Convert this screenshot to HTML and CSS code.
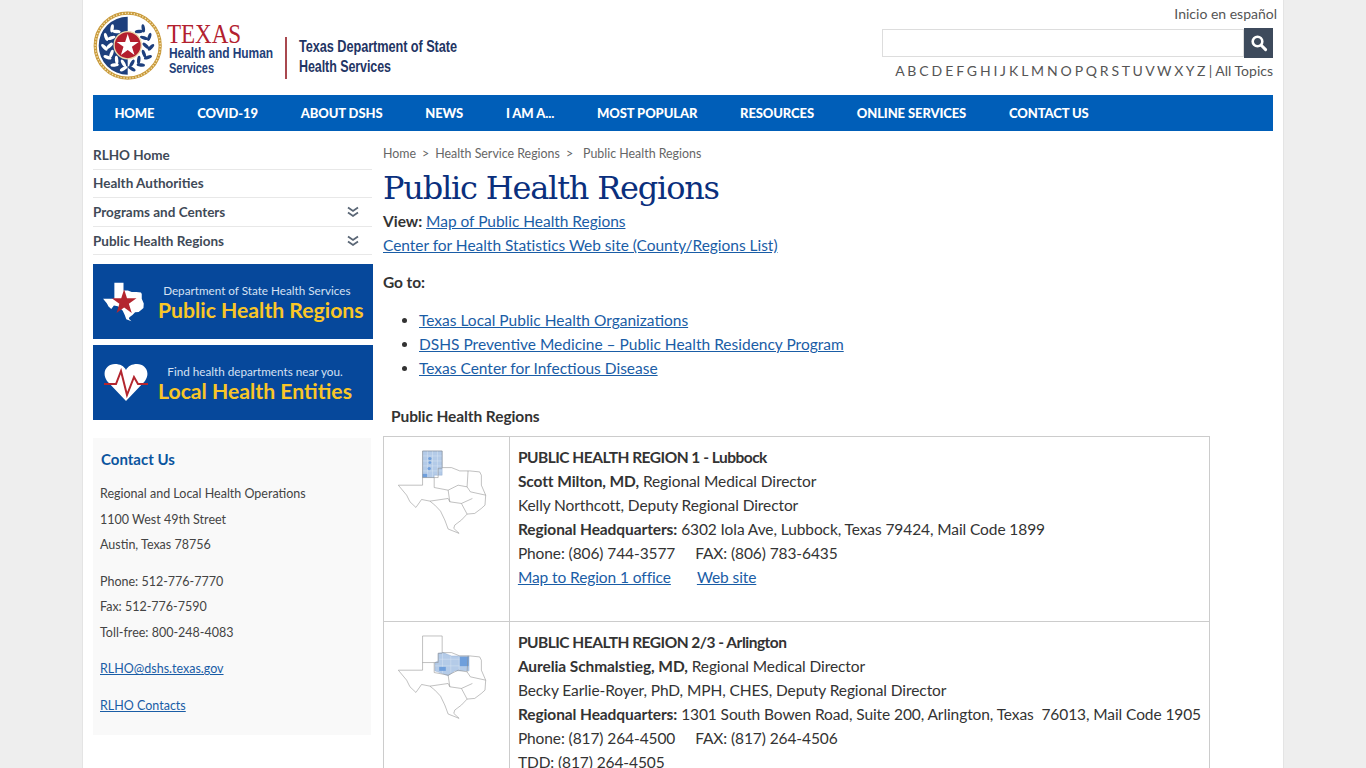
FILE: index.html
```html
<!DOCTYPE html>
<html lang="en">
<head>
<meta charset="utf-8">
<title>Public Health Regions</title>
<link rel="stylesheet" href="styles.css">
</head>
<body>
<svg class="defs" width="0" height="0" aria-hidden="true">
  <symbol id="tx" viewBox="0 0 280 260">
    <path class="tx-line" d="M80 5H139V55H167L192 65H222L252 68L257 78V108L270 138L268 168L257 178L237 193L214 195L197 213L177 228L174 238L190 253L157 240L147 213L134 186L117 168L102 156L77 151L60 175L42 158L32 138L7 108H80Z"/>
    <path class="tx-line" d="M80 85H115V115L157 123L162 158L197 163L214 195M102 156L157 148L162 158M157 123L187 108L214 113L224 128L270 138M214 113L217 65M197 163L230 148M115 85H127V57H139"/>
  </symbol>
  <symbol id="star" viewBox="0 0 100 100"><path d="M50 4L61 38H97L68 59L79 94L50 73L21 94L32 59L3 38H39Z"/></symbol>
  <g id="leaf">
    <ellipse cx="-4" cy="-23" rx="4.2" ry="1.7" transform="rotate(-50 -4 -23)"/>
    <ellipse cx="-2" cy="-18" rx="4.2" ry="1.7" transform="rotate(40 -2 -18)"/>
  </g>
</svg>
<div class="page">
  <header class="top">
    <a class="logo" href="#">
      <svg width="370" height="74" viewBox="0 0 370 74">
        <circle cx="34.7" cy="35.7" r="32.5" fill="#fff" stroke="#c99a3b" stroke-width="3.2"/>
        <circle cx="34.7" cy="35.7" r="32.5" fill="none" stroke="#f3e3b5" stroke-width="1.4" stroke-dasharray="1.3 1.7"/>
        <path d="M34.7 6.7A29 29 0 0 0 34.7 64.7Z" fill="#1d3f7d"/>
        <g transform="translate(34.7 35.7)" class="leaves-w">
          <use href="#leaf" transform="rotate(-32)"/>
          <use href="#leaf" transform="rotate(-58)"/>
          <use href="#leaf" transform="rotate(-84)"/>
          <use href="#leaf" transform="rotate(-110)"/>
          <use href="#leaf" transform="rotate(-136)"/>
          <use href="#leaf" transform="rotate(-160)"/>
        </g>
        <g transform="translate(34.7 35.7) scale(-1 1)" class="leaves-b">
          <use href="#leaf" transform="rotate(-32)"/>
          <use href="#leaf" transform="rotate(-58)"/>
          <use href="#leaf" transform="rotate(-84)"/>
          <use href="#leaf" transform="rotate(-110)"/>
          <use href="#leaf" transform="rotate(-136)"/>
          <use href="#leaf" transform="rotate(-160)"/>
        </g>
        <circle cx="34.7" cy="35.2" r="13.6" fill="#b31f2e" stroke="#ecd9ae" stroke-width="1.3"/>
        <use href="#star" class="logo-star" x="23" y="23" width="23.4" height="23.4"/>
        <text class="logo-texas" x="74" y="33" textLength="74" lengthAdjust="spacingAndGlyphs">TEXAS</text>
        <text class="logo-hhs" x="76" y="48" textLength="104" lengthAdjust="spacingAndGlyphs">Health and Human</text>
        <text class="logo-hhs" x="76" y="63" textLength="45" lengthAdjust="spacingAndGlyphs">Services</text>
        <rect x="192" y="27" width="2" height="42" fill="#a9484f"/>
        <text class="logo-dept" x="206" y="42" textLength="158" lengthAdjust="spacingAndGlyphs">Texas Department of State</text>
        <text class="logo-dept" x="206" y="62" textLength="92" lengthAdjust="spacingAndGlyphs">Health Services</text>
      </svg>
    </a>
    <div class="tools">
      <a class="lang" href="#">Inicio en español</a>
      <form class="search">
        <input class="search-input" type="text" aria-label="Search">
        <button class="search-btn" type="button" aria-label="Search">
          <svg width="18" height="18" viewBox="0 0 18 18"><circle cx="7.5" cy="7.5" r="4.8" fill="none" stroke="#fff" stroke-width="2.6"/><path d="M11 11l4.6 4.6" stroke="#fff" stroke-width="3" stroke-linecap="round"/></svg>
        </button>
      </form>
      <div class="az"><span class="az-letters">A B C D E F G H I J K L M N O P Q R S T U V W X Y Z</span> | All Topics</div>
    </div>
  </header>

  <nav class="nav">
    <a href="#">HOME</a><a href="#">COVID-19</a><a href="#">ABOUT DSHS</a><a href="#">NEWS</a><a href="#">I AM A...</a><a href="#">MOST POPULAR</a><a href="#">RESOURCES</a><a href="#">ONLINE SERVICES</a><a href="#">CONTACT US</a>
  </nav>

  <div class="columns">
    <aside class="side">
      <ul class="side-menu">
        <li><a href="#">RLHO Home</a></li>
        <li><a href="#">Health Authorities</a></li>
        <li><a href="#">Programs and Centers</a><svg class="chev" width="12" height="12" viewBox="0 0 12 12"><path d="M1 1.5L6 5L11 1.5M1 6.5L6 10L11 6.5"/></svg></li>
        <li><a href="#">Public Health Regions</a><svg class="chev" width="12" height="12" viewBox="0 0 12 12"><path d="M1 1.5L6 5L11 1.5M1 6.5L6 10L11 6.5"/></svg></li>
      </ul>
      <a class="banner banner-regions" href="#">
        <svg class="banner-icon" width="43" height="40" viewBox="0 0 278 258"><path class="tx-fill" d="M80 5H139V55H167L192 65H222L252 68L257 78V108L270 138L268 168L257 178L237 193L214 195L197 213L177 228L174 238L190 253L157 240L147 213L134 186L117 168L102 156L77 151L60 175L42 158L32 138L7 108H80Z"/><use href="#star" class="tx-star" x="58" y="40" width="170" height="170"/></svg>
        <span class="banner-text"><small>Department of State Health Services</small><strong>Public Health Regions</strong></span>
      </a>
      <a class="banner banner-local" href="#">
        <svg class="banner-icon" width="44" height="38" viewBox="0 0 44 38"><path d="M22 37L3 17C-3 8 3 0 11 0C16 0 20 2 22 6C24 2 28 0 33 0C41 0 47 8 41 17Z" fill="#fff"/><path d="M0 20H12L17 7L23 31L30 13L34 20H44" fill="none" stroke="#b3262f" stroke-width="2"/></svg>
        <span class="banner-text"><small>Find health departments near you.</small><strong>Local Health Entities</strong></span>
      </a>
      <section class="contact">
        <h2>Contact Us</h2>
        <p>Regional and Local Health Operations</p>
        <p>1100 West 49th Street</p>
        <p class="gap">Austin, Texas 78756</p>
        <p>Phone: 512-776-7770</p>
        <p>Fax: 512-776-7590</p>
        <p class="gap">Toll-free: 800-248-4083</p>
        <p class="gap"><a href="#">RLHO@dshs.texas.gov</a></p>
        <p><a href="#">RLHO Contacts</a></p>
      </section>
    </aside>

    <main class="main">
      <div class="crumbs"><a href="#">Home</a><span>&gt;</span><a href="#">Health Service Regions</a><span class="sep2">&gt;</span><a href="#">Public Health Regions</a></div>
      <h1>Public Health Regions</h1>
      <p class="view"><b>View:</b> <a href="#">Map of Public Health Regions</a><br><a href="#">Center for Health Statistics Web site (County/Regions List)</a></p>
      <p class="goto"><b>Go to:</b></p>
      <ul class="links">
        <li><a href="#">Texas Local Public Health Organizations</a></li>
        <li><a href="#">DSHS Preventive Medicine – Public Health Residency Program</a></li>
        <li><a href="#">Texas Center for Infectious Disease</a></li>
      </ul>
      <table class="regions">
        <caption>Public Health Regions</caption>
        <tr>
          <td class="map"><svg class="tx-map" width="93" height="87" viewBox="0 0 280 260"><path class="hl" d="M80 5H139V78H115V85H80Z"/><path class="hl-lines" d="M80 20H139M80 35H139M80 50H139M80 65H139M95 5V85M110 5V85M125 5V78"/><circle class="hl-dot" cx="102" cy="28" r="5"/><circle class="hl-dot" cx="102" cy="40" r="4"/><circle class="hl-dot" cx="100" cy="58" r="5"/><rect class="hl-dot" x="80" y="74" width="14" height="10"/><use href="#tx"/></svg></td>
          <td class="info r1">
            <b class="head">PUBLIC HEALTH REGION 1 - Lubbock</b><br>
            <b>Scott Milton, MD,</b> Regional Medical Director<br>
            Kelly Northcott, Deputy Regional Director<br>
            <b>Regional Headquarters:</b> 6302 Iola Ave, Lubbock, Texas 79424, Mail Code 1899<br>
            Phone: (806) 744-3577 <span class="sp"></span>FAX: (806) 783-6435<br>
            <a href="#">Map to Region 1 office</a><span class="sp2"></span><a href="#">Web site</a>
          </td>
        </tr>
        <tr>
          <td class="map"><svg class="tx-map" width="93" height="87" viewBox="0 0 280 260"><path class="hl" d="M127 57L142 55L167 65H220V110H177L157 125L117 110V85L127 80Z"/><path class="hl-lines" d="M117 95H220M130 75H220M140 55V118M165 65V118M190 65V110"/><rect class="hl-dot" x="192" y="68" width="27" height="28"/><rect class="hl-dot" x="130" y="98" width="20" height="12"/><use href="#tx"/></svg></td>
          <td class="info">
            <b class="head">PUBLIC HEALTH REGION 2/3 - Arlington</b><br>
            <b>Aurelia Schmalstieg, MD,</b> Regional Medical Director<br>
            Becky Earlie-Royer, PhD, MPH, CHES, Deputy Regional Director<br>
            <b>Regional Headquarters:</b> 1301 South Bowen Road, Suite 200, Arlington, Texas &nbsp;76013, Mail Code 1905<br>
            Phone: (817) 264-4500 <span class="sp"></span>FAX: (817) 264-4506<br>
            TDD: (817) 264-4505
          </td>
        </tr>
      </table>
    </main>
  </div>
</div>
</body>
</html>
```

FILE: styles.css
```css
* { box-sizing: border-box; }
html, body { margin: 0; }
body {
  background: #eee;
  color: #333;
  font: 15.5px/24px Lato, "Noto Sans", sans-serif;
  letter-spacing: -.09px;
  height: 768px;
  overflow: hidden;
}
.defs { display: block; height: 0; }
.page {
  width: 1202px;
  margin: 0 auto;
  padding: 0 10px;
  background: #fff;
  border: solid #e4e4e4;
  border-width: 0 1px;
  min-height: 768px;
}
a { color: #1a5da6; }

.top { display: flex; justify-content: space-between; height: 95px; }
.logo { display: block; padding-top: 10px; }
.logo svg { display: block; }
.logo-star { fill: #fff; }
.leaves-w { fill: #fff; }
.leaves-b { fill: #1d3f7d; }
.logo-texas { font: 27px "Liberation Serif", serif; fill: #b3202e; }
.logo-hhs { font: bold 15px "Liberation Sans", sans-serif; fill: #1f3f7a; }
.logo-dept { font: bold 16px "Liberation Sans", sans-serif; fill: #1f3564; }
.tools { display: flex; flex-direction: column; align-items: flex-end; padding-top: 5px; }
.lang { font-size: 14px; line-height: 18px; letter-spacing: 0; color: #555; text-decoration: none; margin-right: -4px; }
.search { display: flex; align-items: center; margin-top: 5px; height: 30px; }
.search-input { width: 362px; height: 28px; border: 1px solid #ddd; padding: 0 6px; background: #fff; }
.search-btn { width: 29px; height: 30px; padding: 0; border: 0; background: #3d4a5c; display: flex; align-items: center; justify-content: center; }
.az { font-size: 14px; line-height: 20px; letter-spacing: 0; color: #555; margin-top: 3px; }
.az-letters { letter-spacing: -.31px; }

.nav { display: flex; height: 36px; background: #005eb8; }
.nav a { color: #fff; font-weight: 900; font-size: 13px; letter-spacing: -.1px; line-height: 36px; padding: 0 21.4px; text-decoration: none; }

.columns { display: flex; align-items: flex-start; padding-top: 10px; }
.side { width: 280px; flex: none; }
.side-menu { list-style: none; margin: 0 1px 0 0; padding: 0; }
.side-menu li { display: flex; justify-content: space-between; align-items: center; height: 28.6px; border-bottom: 1px solid #e8e8e8; padding-right: 13px; }
.side-menu a { color: #3f4a57; font-weight: 700; font-size: 13.5px; letter-spacing: 0; text-decoration: none; }
.chev { fill: none; stroke: #5a6675; stroke-width: 1.8; }
.banner { display: flex; align-items: center; height: 75px; margin-bottom: 6px; background: #06489b; text-decoration: none; }
.side-menu + .banner { margin-top: 9px; }
.banner-icon { flex: none; }
.banner-regions .banner-icon { margin: 0 13px 0 9px; }
.banner-regions small { margin-right: 8px; }
.banner-local .banner-icon { margin: 0 10px 0 11px; }
.banner-text { display: flex; flex-direction: column; align-items: center; padding-top: 2px; letter-spacing: 0; }
.banner-text small { color: #d5e1f3; font-size: 11.7px; line-height: 16px; }
.banner-text strong { color: #f9c627; font-size: 21.2px; line-height: 25px; font-weight: 700; }
.tx-fill { fill: #fff; }
.tx-star { fill: #b3262f; }
.contact { width: 278px; margin-top: 18px; height: 297px; padding: 9px 7px; background: #f9f9f9; }
.contact h2 { margin: 0 0 10px 1px; font-size: 15px; line-height: 24px; letter-spacing: 0; color: #0b559f; font-weight: 700; }
.contact p { margin: 0; font-size: 12.5px; line-height: 25.5px; letter-spacing: 0; color: #444; }
.contact p.gap { margin-bottom: 11px; }

.main { flex: 1; margin-left: 10px; min-width: 0; }
.crumbs { display: flex; font-size: 12.4px; line-height: 22px; letter-spacing: 0; color: #666; margin-top: 2px; }
.crumbs a { color: #666; text-decoration: none; }
.crumbs span { margin: 0 6px; }
.crumbs .sep2 { margin-right: 10px; }
h1 { margin: 3px 0 0; font: 32px/40px "DejaVu Serif", serif; letter-spacing: -1.2px; color: #0a2f7d; }
.view { margin: 1px 0 13px; letter-spacing: -.03px; }
.goto { margin: 0 0 14px; }
.links { margin: 0 0 24px; padding-left: 36px; letter-spacing: 0; }
.regions { border-collapse: collapse; width: 827px; }
.regions caption { text-align: left; padding: 0 8px 8px; font-weight: 700; line-height: 24px; }
.regions td { border: 1px solid #ccc; vertical-align: top; padding: 8px; }
.regions .map { width: 126px; padding: 12px 0 0 12px; }
.regions .info { white-space: nowrap; }
.regions .head { letter-spacing: -.5px; }
.tx-map { display: block; }
.regions .r1 { height: 185px; }
.hl { fill: #b4cbe8; stroke: #7f9fc9; stroke-width: 1; }
.hl-lines { fill: none; stroke: #e1eaf6; stroke-width: 1.2; }
.hl-dot { fill: #6f9fdc; }
.tx-line { fill: none; stroke: #8a8a8a; stroke-width: 1.6; }
.sp { display: inline-block; width: 16px; }
.sp2 { display: inline-block; width: 26px; }
```
